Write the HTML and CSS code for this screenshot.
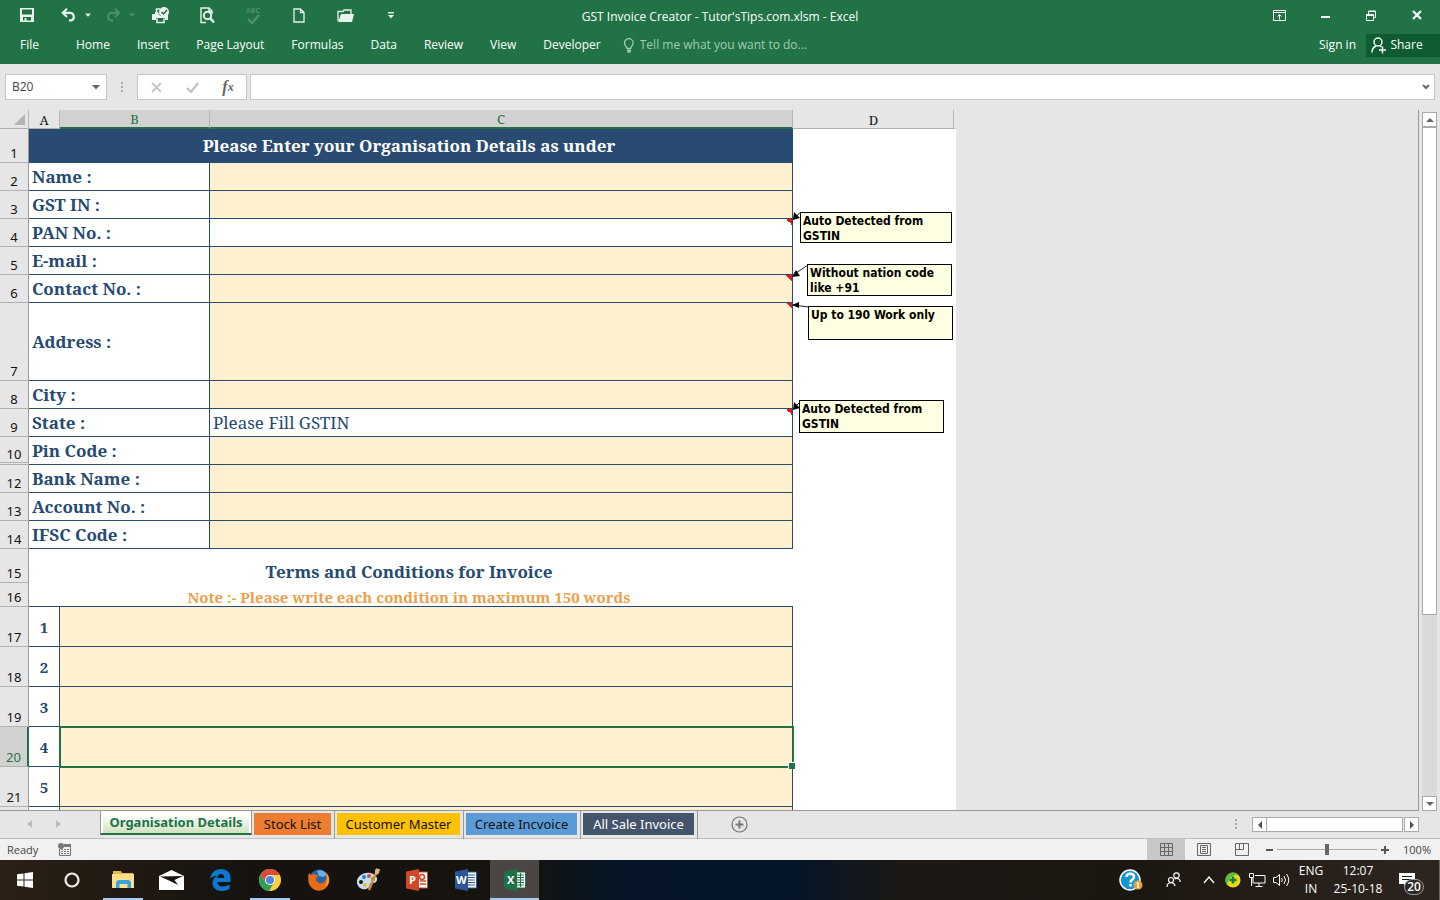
FILE: index.html
```html
<!DOCTYPE html>
<html lang="en">
<head>
<meta charset="utf-8">
<title>GST Invoice Creator - Tutor'sTips.com.xlsm - Excel</title>
<link rel="stylesheet" href="styles.css">
</head>
<body>
<header class="ribbon">
  <div class="titlebar">
    <div class="quick">
      <button class="qbtn" aria-label="Save"><svg width="14" height="14" viewBox="0 0 14 14"><path fill="#e8f2ec" fill-rule="evenodd" d="M0 0h14v14H0zM2 1.500v5h10v-5zM3 9v3.500h1.500V10h2v2.500H11V9z"/></svg></button>
      <div class="qgroup">
        <button class="qmain" aria-label="Undo"><svg width="16" height="14" viewBox="0 0 16 14" fill="none" stroke="#e8f2ec" stroke-width="2.200"><path d="M6 .8 1.800 4.800 6 9M2 4.800h7.500a4 4 0 0 1 1 7.600H8"/></svg></button>
        <button class="qdrop" aria-label="Undo list"><svg width="6" height="4"><path fill="#e8f2ec" d="M0 .5h6L3 3.800z"/></svg></button>
      </div>
      <div class="qgroup">
        <button class="qmain" aria-label="Redo"><svg width="16" height="14" viewBox="0 0 16 14" fill="none" stroke="#4b9169" stroke-width="2"><path d="M10 .8 14.200 4.800 10 9M14 4.800H6.500a4 4 0 0 0-1 7.600H8"/></svg></button>
        <button class="qdrop" aria-label="Redo list"><svg width="6" height="4"><path fill="#4b9169" d="M0 .5h6L3 3.800z"/></svg></button>
      </div>
      <button class="qbtn" aria-label="Quick print"><svg width="18" height="17" viewBox="0 0 18 17"><path fill="#e8f2ec" d="M0 7h3V5h3l2 4h5l3-3v7h-3v-2H4v2H0z"/><path fill="none" stroke="#e8f2ec" stroke-width="1.500" d="M4.500 5V2H8M5 11.500v4h7v-4"/><circle cx="12" cy="5" r="5" fill="#e8f2ec"/><path d="m9.500 5 2 2 3.500-4" fill="none" stroke="#217346" stroke-width="1.500"/></svg></button>
      <button class="qbtn" aria-label="Print preview"><svg width="15" height="17" viewBox="0 0 15 17" fill="none" stroke="#e8f2ec"><path stroke-width="1.400" d="M6 15.500H1V1h8l3 3v3M9 1v3.500h3"/><circle cx="7.500" cy="8.500" r="3.700" stroke-width="2"/><path stroke-width="2.400" d="m10 11 4 4.500"/></svg></button>
      <button class="qbtn spell" aria-label="Spelling"><span>ABC</span><svg width="13" height="10" viewBox="0 0 13 10"><path d="m1 5 4 4 7-8" fill="none" stroke="#4b9169" stroke-width="2.400"/></svg></button>
      <button class="qbtn" aria-label="New"><svg width="12" height="15" viewBox="0 0 12 15" fill="none" stroke="#e8f2ec" stroke-width="1.300"><path d="M1 1h6.500L11 4.500V14H1zM7.500 1v3.500H11"/></svg></button>
      <button class="qbtn" aria-label="Open"><svg width="17" height="13" viewBox="0 0 17 13"><path fill="none" stroke="#e8f2ec" stroke-width="1.300" d="M1 12V2.500h5l1-1.500h7v4"/><path fill="#e8f2ec" d="M4 5h13l-2 8H1z"/></svg></button>
      <button class="qbtn" aria-label="Customize toolbar"><svg width="6" height="8"><path fill="#e8f2ec" d="M0 1h6v1.500H0zM0 4h6L3 7.500z"/></svg></button>
    </div>
    <h1 class="doc-title">GST Invoice Creator - Tutor'sTips.com.xlsm - Excel</h1>
    <div class="winbtns">
      <button class="qbtn" aria-label="Ribbon display"><svg width="13" height="11" viewBox="0 0 13 11" fill="none" stroke="#fff"><path d="M.5.5h12v10H.5zM.5 2.500h12M6.500 9.500V5M4.500 6.500l2-2 2 2"/></svg></button>
      <button class="qbtn" aria-label="Minimize"><svg width="9" height="11"><path fill="#fff" d="M0 6h9v2H0z"/></svg></button>
      <button class="qbtn" aria-label="Restore"><svg width="10" height="11" viewBox="0 0 10 11" fill="none" stroke="#fff"><path d="M.5 4.500h7v6h-7zM.5 5.500h7M2.500 4V1.500h7v6H8M2.500 1h7"/></svg></button>
      <button class="qbtn" aria-label="Close"><svg width="10" height="10"><path d="m1 1 8 8m0-8L1 9" stroke="#fff" stroke-width="2.200"/></svg></button>
    </div>
  </div>
  <nav class="tabs">
    <button class="tab file">File</button><button class="tab">Home</button><button class="tab">Insert</button><button class="tab">Page Layout</button><button class="tab">Formulas</button><button class="tab">Data</button><button class="tab">Review</button><button class="tab">View</button><button class="tab">Developer</button>
    <label class="tell"><svg width="12" height="15" viewBox="0 0 12 15" fill="none" stroke="#a0cbb2" stroke-width="1.300"><path d="M4 10.500C4 8.500 1.500 8 1.500 5a4.300 4.300 0 0 1 8.600 0c0 3-2.500 3.500-2.500 5.500zM4 12.500h4M4.500 14h3"/></svg><input type="text" placeholder="Tell me what you want to do..." aria-label="Tell me what you want to do"></label>
    <button class="signin">Sign in</button>
    <button class="share"><svg width="15" height="17" viewBox="0 0 15 17" fill="none" stroke="#fff" stroke-width="1.400"><circle cx="7" cy="5" r="4"/><path d="M1 15.500c0-3 1.500-5.500 4-6.500M9 9l1.500 1M8 13h7M11.500 9.500v7"/></svg>Share</button>
  </nav>
</header>

<section class="formula">
  <label class="namebox"><input type="text" value="B20" aria-label="Name box"><svg width="8" height="5"><path fill="#666" d="M0 0h8L4 4.500z"/></svg></label>
  <svg class="dots" width="3" height="11"><path fill="#aaa" d="M0 0h2v2H0zM0 4h2v2H0zM0 8h2v2H0z"/></svg>
  <div class="fxbox">
    <button aria-label="Cancel"><svg width="11" height="11"><path d="m1 1 9 9m0-9-9 9" stroke="#c4c4c4" stroke-width="1.800"/></svg></button>
    <button aria-label="Enter"><svg width="13" height="11"><path d="m1 6 4 4 7-9" fill="none" stroke="#c4c4c4" stroke-width="2.400"/></svg></button>
    <button aria-label="Insert function" class="fx">f<span>x</span></button>
  </div>
  <label class="fbar"><input type="text" aria-label="Formula bar"><svg width="8" height="6"><path d="m1 1 3 3 3-3" fill="none" stroke="#666" stroke-width="2"/></svg></label>
</section>

<main class="work">
  <div class="sheet">
    <table class="grid">
      <colgroup><col class="c-head"><col class="c-a"><col class="c-b"><col class="c-c"><col class="c-d"></colgroup>
      <thead><tr><th class="corner"><svg width="11" height="11"><path d="M11 0v11H0z" fill="#b4b4b4"/></svg></th><th>A</th><th class="sel">B</th><th class="sel">C</th><th class="last">D</th></tr></thead>
      <tbody>
        <tr class="r-title"><th>1</th><td colspan="3" class="banner">Please Enter your Organisation Details as under</td><td></td></tr>
        <tr class="r-row"><th>2</th><td colspan="2" class="lab">Name :</td><td class="fill"></td><td></td></tr>
        <tr class="r-row"><th>3</th><td colspan="2" class="lab">GST IN :</td><td class="fill"></td><td></td></tr>
        <tr class="r-row"><th>4</th><td colspan="2" class="lab">PAN No. :</td><td class="val noted"></td><td></td></tr>
        <tr class="r-row"><th>5</th><td colspan="2" class="lab">E-mail :</td><td class="fill"></td><td></td></tr>
        <tr class="r-row"><th>6</th><td colspan="2" class="lab">Contact No. :</td><td class="fill noted"></td><td></td></tr>
        <tr class="r-addr"><th>7</th><td colspan="2" class="lab">Address :</td><td class="fill noted"></td><td></td></tr>
        <tr class="r-row"><th>8</th><td colspan="2" class="lab">City :</td><td class="fill"></td><td></td></tr>
        <tr class="r-row"><th>9</th><td colspan="2" class="lab">State :</td><td class="val noted">Please Fill GSTIN</td><td></td></tr>
        <tr class="r-row"><th class="gap">10</th><td colspan="2" class="lab">Pin Code :</td><td class="fill"></td><td></td></tr>
        <tr class="r-row"><th>12</th><td colspan="2" class="lab">Bank Name :</td><td class="fill"></td><td></td></tr>
        <tr class="r-row"><th>13</th><td colspan="2" class="lab">Account No. :</td><td class="fill"></td><td></td></tr>
        <tr class="r-row"><th>14</th><td colspan="2" class="lab">IFSC Code :</td><td class="fill"></td><td></td></tr>
        <tr class="r-title"><th>15</th><td colspan="3" class="terms">Terms and Conditions for Invoice</td><td></td></tr>
        <tr class="r-note"><th>16</th><td colspan="3" class="hint">Note :- Please write each condition in maximum 150 words</td><td></td></tr>
        <tr class="r-term"><th>17</th><td class="num">1</td><td colspan="2" class="fill"></td><td></td></tr>
        <tr class="r-term"><th>18</th><td class="num">2</td><td colspan="2" class="fill"></td><td></td></tr>
        <tr class="r-term"><th>19</th><td class="num">3</td><td colspan="2" class="fill"></td><td></td></tr>
        <tr class="r-term"><th class="sel">20</th><td class="num">4</td><td colspan="2" class="fill active"></td><td></td></tr>
        <tr class="r-term"><th>21</th><td class="num">5</td><td colspan="2" class="fill"></td><td></td></tr>
        <tr class="r-term"><th></th><td class="num"></td><td colspan="2" class="fill"></td><td></td></tr>
      </tbody>
    </table>
    <svg class="arrows" width="20" height="204" viewBox="0 0 20 204"><path d="M10 2 2 9M17 55 2 65M18 97 2 95M9 192 2 199" stroke="#222" fill="none"/><path d="m2 10 1-8 6 6zM1 67l4-7 4 6zM1 95l7-3v6zM2 200l1-8 6 6z"/></svg>
    <aside class="note n1">Auto Detected from GSTIN</aside>
    <aside class="note n2">Without nation code like +91</aside>
    <aside class="note n3">Up to 190 Work only</aside>
    <aside class="note n4">Auto Detected from GSTIN</aside>
  </div>
  <div class="vscroll">
    <button aria-label="Scroll up"><svg width="8" height="4"><path fill="#666" d="M4 0 8 4H0z"/></svg></button>
    <div class="vtrack"><div class="vthumb"></div></div>
    <button aria-label="Scroll down"><svg width="8" height="4"><path fill="#666" d="M0 0h8L4 4z"/></svg></button>
  </div>
</main>

<section class="sheetbar">
  <div class="sheetnav"><button aria-label="Previous sheet"><svg width="5" height="8"><path fill="#bdbdbd" d="M5 0v8L0 4z"/></svg></button><button aria-label="Next sheet"><svg width="5" height="8"><path fill="#bdbdbd" d="M0 0v8l5-4z"/></svg></button></div>
  <button class="stab current"><span>Organisation Details</span></button>
  <button class="stab stock"><span>Stock List</span></button>
  <button class="stab cust"><span>Customer Master</span></button>
  <button class="stab create"><span>Create Incvoice</span></button>
  <button class="stab sale"><span>All Sale Invoice</span></button>
  <button class="add" aria-label="New sheet"><svg width="17" height="17" fill="none" stroke="#777"><circle cx="8.500" cy="8.500" r="7.500" stroke-width="1.200"/><path d="M4.500 8.500h8m-4-4v8" stroke-width="2"/></svg></button>
  <svg class="dots2" width="3" height="11"><path fill="#aaa" d="M0 0h2v2H0zM0 4h2v2H0zM0 8h2v2H0z"/></svg>
  <div class="hscroll"><button aria-label="Scroll left"><svg width="4" height="8"><path fill="#555" d="M4 0v8L0 4z"/></svg></button><div class="hthumb"></div><button aria-label="Scroll right"><svg width="4" height="8"><path fill="#555" d="M0 0v8l4-4z"/></svg></button></div>
</section>

<footer class="status">
  <span class="ready">Ready</span>
  <button class="macro" aria-label="Record macro"><svg width="13" height="13"><path fill="#777" d="M6 1h7v3H6z"/><circle cx="3" cy="3" r="3" fill="#777"/><path d="M1.500 6v6.500h11V3" fill="none" stroke="#777"/><path d="M3 6.500h8M3 8.500h8M3 10.500h8" stroke="#777" stroke-dasharray="2 1"/></svg></button>
  <div class="views">
    <button class="on" aria-label="Normal view"><svg width="13" height="13" fill="none" stroke="#666"><path d="M.5.5h12v12H.5zM.5 4.500h12M.5 8.500h12M4.500.5v12M8.500.5v12"/></svg></button>
    <button aria-label="Page layout view"><svg width="14" height="13" fill="none" stroke="#666"><path d="M.5.5h13v12H.5zM3.500 2.500h7v8h-7zM5 4.500h4M5 6.500h4M5 8.500h4"/></svg></button>
    <button aria-label="Page break view"><svg width="14" height="13" fill="none" stroke="#666"><path d="M.5.5h13v12H.5zM.5 6.500h8M4.500.5v6M8.500.5v6"/></svg></button>
  </div>
  <button class="zbtn" aria-label="Zoom out"><svg width="7" height="9"><path fill="#555" d="M0 4h7v2H0z"/></svg></button>
  <input class="zoom" type="range" min="0" max="100" value="50" aria-label="Zoom">
  <button class="zbtn" aria-label="Zoom in"><svg width="8" height="9"><path fill="#555" d="M0 4h8v2H0zM3 1h2v8H3z"/></svg></button>
  <span class="pct">100%</span>
</footer>

<div class="taskbar">
  <button class="task" aria-label="Start"><svg width="16" height="16"><path fill="#fff" d="M0 2.300 6.500 1.400v6.100H0zM7.500 1.200 16 0v7.500H7.500zM0 8.500h6.500v6.100L0 13.700zM7.500 8.500H16V16l-8.500-1.200z"/></svg></button>
  <button class="task search" aria-label="Search"><svg width="16" height="16"><circle cx="8" cy="8" r="6.500" fill="none" stroke="#eee" stroke-width="2.200"/></svg></button>
  <button class="task run" aria-label="File Explorer"><svg width="22" height="20" viewBox="0 0 22 20"><path fill="#e8b84a" d="M1 1h8l1 2h11v4H1z"/><path fill="#fbe08a" d="M0 4h22v14H0z"/><path fill="#3ba3dc" d="M4 18v-6l2-2h11l2 2v6h-3.500v-4h-8v4z"/></svg></button>
  <button class="task" aria-label="Mail"><svg width="25" height="20" viewBox="0 0 25 20"><path fill="#fff" d="M0 6 12.500 0 25 6v14H0z"/><path fill="#1a1510" d="M1 6.500 24 6l-8.500 4 3.500 5-8-4z"/></svg></button>
  <button class="task" aria-label="Edge"><svg width="21" height="22" viewBox="0 0 21 22"><path fill="#0a78d4" d="M0 10C1 3.500 5.500 0 11 0c6 0 9.500 4 9.500 9.500V13H7c.5 3 3 4.500 6 4.500 2.500 0 4.500-.7 6.500-2V20c-2 1.300-5 2-7.500 2C6 22 2.500 18.500 2.500 14c0-3.500 2-6 5-7.200C4.500 6.800 1.500 8 0 10zM7.300 9h7C14.300 6.500 13 5 11 5 9 5 7.700 6.500 7.300 9z"/></svg></button>
  <button class="task run" aria-label="Chrome"><svg width="22" height="22" viewBox="0 0 22 22"><circle cx="11" cy="11" r="11" fill="#f9cf3f"/><path fill="#d94b3b" d="M1.500 5.500A11 11 0 0 1 20.500 5.500L21 6H11L6.500 13.500z"/><path fill="#2e9e56" d="M1.500 5.500 6.500 13.500l4.500 2.500 3-1-4 7A11 11 0 0 1 1.500 5.500z"/><circle cx="11" cy="11" r="5" fill="#fff"/><circle cx="11" cy="11" r="4" fill="#4a86e0"/></svg></button>
  <button class="task" aria-label="Firefox"><svg width="22" height="22" viewBox="0 0 22 22"><circle cx="11" cy="10.500" r="10" fill="#2463a8"/><path fill="#69b0e0" d="M9 2c4-2 9 1 10 4l-4 2-4-1z"/><path fill="#e86a17" d="M1 4l2 2 3-1 2 1 3 1-3 2v2c2 4 7 4 9 1 2-3 1-6 0-9 4 2 5 7 4 11a10.500 10.500 0 0 1-20.500-1C0 9 0 6 1 4z"/><path fill="#f8b62c" d="M19 5c3 5 2 10-2 13 2-4 3-8 2-13z"/></svg></button>
  <button class="task" aria-label="Paint"><svg width="24" height="24" viewBox="0 0 24 24"><path fill="#c5dcee" d="M1 15C0 9 7 4 14 5c6 1 9 6 6 9-2 2-5 0-6 2s0 4-4 5C6 22 2 20 1 15z"/><circle cx="5" cy="14" r="2" fill="#1a1510"/><circle cx="8" cy="9" r="2" fill="#3479c4"/><circle cx="13" cy="8" r="2" fill="#d44e3a"/><circle cx="17" cy="11" r="2" fill="#5aa945"/><circle cx="9" cy="17" r="2" fill="#e9bb38"/><path d="m13 22 7-17" stroke="#d88831" stroke-width="2.400"/><path fill="#d9b783" d="m19 5 0-3 2-2 1 1 2 0-1 4-2 2z"/></svg></button>
  <button class="task" aria-label="PowerPoint"><svg class="office" width="22" height="22" viewBox="0 0 22 22"><path fill="#fff" stroke="#d04727" d="M10 3h11.500v16H10z"/><path d="M14 12h6M14 15h6" stroke="#d04727" stroke-width="1.500"/><circle cx="16" cy="8" r="2.500" fill="none" stroke="#d04727" stroke-width="1.500"/><path fill="#d04727" d="m0 2.500 13-2.500v22L0 19.500z"/><text x="3" y="15">P</text></svg></button>
  <button class="task" aria-label="Word"><svg class="office" width="22" height="22" viewBox="0 0 22 22"><path fill="#fff" stroke="#2a5699" d="M10 3h11.500v16H10z"/><path d="M13 6h7M13 8.500h7M13 11h7M13 13.500h7M13 16h7" stroke="#2a5699"/><path fill="#2a5699" d="m0 2.500 13-2.500v22L0 19.500z"/><text x="1" y="15">W</text></svg></button>
  <button class="task open" aria-label="Excel"><svg class="office" width="22" height="22" viewBox="0 0 22 22"><path fill="#fff" stroke="#1e7145" d="M10 3h11.500v16H10z"/><path d="M13 6h7M13 8.500h7M13 11h7M13 13.500h7M13 16h7M16.500 4v14" stroke="#1e7145"/><path fill="#1e7145" d="m0 2.500 13-2.500v22L0 19.500z"/><text x="3" y="15">X</text></svg></button>
  <div class="tray">
    <button class="t-wide" aria-label="Help"><svg width="24" height="22" viewBox="0 0 24 22"><circle cx="11" cy="11" r="10" fill="#1795d3" stroke="#fff" stroke-width="1.500"/><path d="M7.500 8c0-4.500 7.500-4.500 7.500 0 0 2.500-3.500 2.500-3.500 5.500m0 1.500v2.500" fill="none" stroke="#fff" stroke-width="2.500"/><circle cx="19" cy="16" r="4.500" fill="#e9a23b"/><path d="M19 13v6" stroke="#fff" stroke-width="1.500"/></svg></button>
    <button class="t-wide" aria-label="People"><svg width="15" height="16" viewBox="0 0 15 16" fill="none" stroke="#fff" stroke-width="1.200"><circle cx="10.500" cy="3.500" r="2.700"/><circle cx="5" cy="8" r="2.500"/><path d="M1 15c0-3 2-4.300 4-4.300S8.500 12 9 14M8.500 7c3-1.500 5.500 0 5.800 3"/></svg></button>
    <button class="t-ico" aria-label="Hidden icons"><svg width="12" height="8"><path d="m1 7 5-6 5 6" fill="none" stroke="#fff" stroke-width="1.300"/></svg></button>
    <button class="t-ico" aria-label="Security"><svg width="16" height="16"><circle cx="8" cy="8" r="7.500" fill="#e8d91e"/><path fill="#5ab947" d="M1 5a7.500 7.500 0 0 1 13-1C10 1 4 4 2 13 0 10 0 7 1 5z"/><path d="M8 4.500v7M4.500 8h7" stroke="#167a38" stroke-width="2.500"/></svg></button>
    <button class="t-ico" aria-label="Network"><svg width="17" height="14" viewBox="0 0 17 14" fill="none" stroke="#fff"><path d="M6 2.500h10v7.500H4V5M10 10v3M6.500 13.500h7M.5.500h4v4h-4zM2.500 4.500V13"/></svg></button>
    <button class="t-ico" aria-label="Volume"><svg width="17" height="14" viewBox="0 0 17 14" fill="none" stroke="#fff"><path d="M.5 4.500h2.500l3.500-3v11L3 9.500H.5zM8.500 5q1.500 2 0 4M11 3q3 4 0 8M13.500 1q4.500 6 0 12"/></svg></button>
    <div class="lang"><span>ENG</span><span>IN</span></div>
    <div class="clock"><span>12:07</span><span>25-10-18</span></div>
    <button class="action" aria-label="Notifications"><svg width="16" height="14"><path fill="#fff" d="M0 0h16v11H8l-3 3v-3H0z"/><path d="M3 3.500h10M3 6.500h10" stroke="#1a1510"/></svg><span>20</span></button>
  </div>
</div>
</body>
</html>
```

FILE: styles.css
```css
* { box-sizing: border-box; }
body {
  margin: 0;
  height: 100vh;
  display: flex;
  flex-direction: column;
  overflow: hidden;
  background: #e6e6e6;
  color: #444;
  font: 12px/16px "Open Sans", "Noto Sans", sans-serif;
}
button, input { font: inherit; color: inherit; border: 0; margin: 0; padding: 0; background: none; border-radius: 0; }
button { display: flex; align-items: center; justify-content: center; white-space: nowrap; }
input { outline: 0; min-width: 0; }
svg { display: block; flex: none; }

/* Ribbon */
.ribbon { background: #217346; color: #fff; height: 64px; flex: none; }
.titlebar { display: grid; grid-template-columns: 1fr auto 1fr; height: 31px; }
.quick { display: flex; padding-left: 4px; }
.qbtn { width: 46px; height: 30px; }
.qgroup { display: flex; margin-left: 6px; }
.qmain { width: 26px; height: 30px; }
.qdrop { width: 12px; height: 30px; }
.spell { flex-direction: column; color: #4b9169; font-size: 7px; line-height: 7px; font-weight: 700; }
.doc-title { margin: 0; font-size: 12px; line-height: 33px; font-weight: 400; }
.winbtns { display: flex; justify-content: flex-end; }
.tabs { display: flex; align-items: center; height: 28px; }
.tab { padding: 0 14px 0 13px; }
.tab.file { padding: 0 24px 0 20px; }
.tell { display: flex; align-items: center; gap: 5px; padding-left: 8px; flex: 1; }
.tell input { flex: 1; }
.tell input::placeholder { color: #a0cbb2; opacity: 1; }
.signin { padding: 0 10px; }
.share { background: #0e5c2f; height: 23px; width: 74px; gap: 4px; padding-right: 12px; }

/* Formula bar */
.formula { display: flex; align-items: center; height: 46px; flex: none; padding: 0 5px; }
.namebox, .fxbox, .fbar { display: flex; align-items: center; height: 26px; background: #fff; border: 1px solid #c6c6c6; }
.namebox { width: 102px; padding: 0 6px; }
.namebox input { flex: 1; }
.dots { margin: 0 13px 0 14px; }
.fxbox { width: 110px; }
.fxbox button { flex: 1; height: 24px; }
.fx { font: italic 700 16px/20px "Liberation Serif", serif; color: #666; }
.fx span { font-size: 12px; }
.fbar { flex: 1; margin-left: 3px; padding: 0 4px; }
.fbar input { flex: 1; }

/* Worksheet */
.work { flex: 1; min-height: 0; display: flex; }
.sheet { flex: 1; position: relative; overflow: hidden; border-right: 1px solid #999; border-bottom: 1px solid #999; }
.grid { table-layout: fixed; border-collapse: separate; border-spacing: 0; width: 956px; font-family: "Noto Serif", "DejaVu Serif Condensed", "DejaVu Serif", serif; }
.c-head { width: 29px; }
.c-a { width: 31px; }
.c-b { width: 150px; }
.c-c { width: 583px; }
.c-d { width: 163px; }
.grid th { padding: 0; font-weight: 400; background: #e6e6e6; color: #111; }
.grid td { padding: 0; background: #fff; color: #264a70; overflow: hidden; }
.grid thead th { height: 19px; padding-top: 1px; border-right: 1px solid #b5b5b5; border-bottom: 1px solid #b0b0b0; font-size: 13px; line-height: 16px; }
.grid thead .sel { background: #d2d2d2; color: #217346; border-bottom: 2px solid #217346; }
.grid thead .last { border-right: 2px solid #e6e6e6; background: linear-gradient(#b5b5b5, #b5b5b5) right / 1px 100% no-repeat #e6e6e6; }
.grid .corner svg { margin-left: 14px; }
.grid tbody th { padding-bottom: 1px; border-right: 1px solid #999; border-bottom: 1px solid #b0b0b0; font: 13px/15px "Noto Sans", sans-serif; vertical-align: bottom; }
.grid tbody .sel { background: #d2d2d2; color: #217346; border-right: 2px solid #217346; }
.grid tbody .gap { padding: 0; border-bottom: 3px double #b0b0b0; }
.r-title { height: 34px; }
.r-row { height: 28px; }
.r-addr { height: 78px; }
.r-note { height: 24px; }
.r-term { height: 40px; }
.grid .banner { padding-right: 4px; background: #294b71; color: #fff; text-align: center; font-size: 17px; line-height: 20px; font-weight: 700; }
.grid .lab { padding-left: 3px; font-size: 17px; line-height: 20px; font-weight: 700; border-right: 1px solid #294b71; border-bottom: 1px solid #294b71; }
.grid .fill, .grid .val { border-right: 1px solid #294b71; border-bottom: 1px solid #294b71; }
.grid .fill { background: #fff1cf; }
.grid .val { padding-left: 3px; font-size: 17px; line-height: 20px; }
.grid .noted { background-image: linear-gradient(45deg, transparent 50%, #e01b1b 50%); background-size: 6px 6px; background-position: right top; background-repeat: no-repeat; }
.grid .terms { text-align: center; font-size: 17px; line-height: 20px; font-weight: 700; padding: 12px 4px 0 0; }
.grid .hint { padding: 4px 4px 0 0; text-align: center; font-size: 15px; line-height: 16px; font-weight: 700; color: #ee9f4b; border-bottom: 1px solid #294b71; }
.grid .num { text-align: center; font-size: 15px; line-height: 20px; font-weight: 700; border-right: 1px solid #294b71; border-bottom: 1px solid #294b71; }
.grid .active { position: relative; overflow: visible; outline: 2px solid #217346; outline-offset: -1px; }
.active::after { content: ""; position: absolute; right: -3px; bottom: -3px; width: 6px; height: 6px; background: #217346; border: solid #fff; border-width: 1px 0 0 1px; }
.arrows { position: absolute; left: 791px; top: 100px; }
.note { position: absolute; padding: 1px 2px; background: #ffffe1; border: 1px solid #000; color: #000; font: 700 12px/15px "DejaVu Sans Condensed", "DejaVu Sans", sans-serif; }
.n1 { left: 800px; top: 102px; width: 152px; height: 31px; }
.n2 { left: 807px; top: 154px; width: 145px; height: 32px; }
.n3 { left: 808px; top: 196px; width: 145px; height: 34px; }
.n4 { left: 799px; top: 290px; width: 145px; height: 33px; }
.vscroll { width: 21px; padding: 2px 3px 0; display: flex; flex-direction: column; }
.vscroll button { height: 15px; flex: none; background: #fff; border: 1px solid #aaa; }
.vtrack { flex: 1; background: #dadada; }
.vthumb { height: 73%; background: #fff; border: 1px solid #aaa; }

/* Sheet tabs */
.sheetbar { display: flex; height: 28px; flex: none; border-bottom: 1px solid #c0c0c0; font: 13px/18px "Noto Sans", sans-serif; color: #111; }
.sheetnav { width: 100px; display: flex; padding-left: 15px; }
.sheetnav button { width: 29px; height: 26px; }
.stab { padding: 2px 3px 4px 2px; height: 28px; border-right: 1px solid #999; background-clip: content-box; width: 117px; }
.stock { width: 83px; background-color: #ed7d31; }
.cust { width: 129px; background-color: #ffc000; }
.create { background-color: #5b9bd5; }
.sale { background-color: #44546a; color: #fff; }
.current { width: 152px; height: 24px; padding: 0 2px 1px; background: #fff; border: 1px solid #999; border-top: 0; border-bottom: 2px solid #217346; color: #217346; font-weight: 700; }
.current span { flex: 1; line-height: 22px; padding-top: 1px; background: linear-gradient(#fff 20%, #cfe3c0); }
.add { margin-left: 33px; height: 26px; }
.dots2 { margin: 8px 14px 0 auto; }
.hscroll { display: flex; width: 167px; height: 15px; margin: 6px 21px 0 0; }
.hscroll button { width: 15px; background: #fff; border: 1px solid #aaa; }
.hthumb { flex: 1; background: #fff; border: 1px solid #aaa; margin-right: 1px; border-left: 0; }

/* Status bar */
.status { display: flex; align-items: center; height: 21px; flex: none; background: #f1f1f1; padding: 0 9px 0 7px; font-size: 11px; }
.macro { margin-left: 20px; }
.views { display: flex; margin: 0 4px 0 auto; }
.views button { width: 38px; height: 21px; }
.views .on { background: #c8c8c8; }
.zbtn { width: 8px; }
.zoom { appearance: none; width: 100px; height: 12px; margin: 0 4px; background: linear-gradient(#aaa, #aaa) center / 100% 1px no-repeat; }
.zoom::-webkit-slider-thumb { appearance: none; width: 4px; height: 11px; background: #666; }
.pct { width: 42px; text-align: right; }

/* Taskbar */
.taskbar { display: flex; height: 40px; flex: none; color: #fff; background: linear-gradient(90deg, #2b2015, #15120f 18%, #17130f 36%, #051527 43%, #041528 55%, #1d1813 63%, #1c1611 78%, #2d2520); }
.task { width: 49px; height: 40px; }
.search { padding-right: 3px; }
.run { background: linear-gradient(#a9c9f5, #a9c9f5) center bottom / 40px 2px no-repeat; }
.open { background: linear-gradient(#a9c9f5, #a9c9f5) center bottom / 100% 2px no-repeat #494643; }
.office text { font: 700 11px "Open Sans", sans-serif; fill: #fff; }
.tray { display: flex; margin-left: auto; }
.t-wide { width: 43px; height: 40px; padding-right: 6px; }
.t-ico { width: 24px; height: 40px; padding-right: 2px; }
.lang, .clock { display: flex; flex-direction: column; align-items: center; justify-content: center; line-height: 18px; padding-bottom: 1px; }
.lang { width: 34px; }
.clock { width: 60px; }
.action { position: relative; width: 52px; height: 40px; padding-right: 14px; border-right: 1px solid #6b6763; }
.action span { position: absolute; left: 16px; top: 19px; width: 20px; height: 16px; border: 1px solid #999; border-radius: 8px; background: #2d2a28; font-size: 12px; font-weight: 600; line-height: 14px; text-align: center; }
```
